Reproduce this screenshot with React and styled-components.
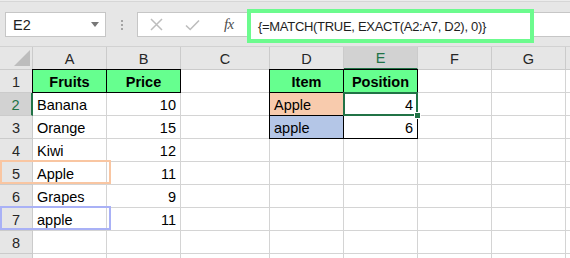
import React from "react";
import styled, { createGlobalStyle, css } from "styled-components";

const GREEN = "#66ff8f";
const EXCEL = "#217346";

const GlobalStyle = createGlobalStyle`
  body {
    margin: 0;
    background: #fff;
    font-family: "Liberation Sans", Arial, sans-serif;
  }
`;

const Sheet = styled.div`
  width: 570px;
  height: 258px;
  overflow: hidden;
  background: #fff;
`;

const Toolbar = styled.div`
  display: flex;
  align-items: flex-start;
  height: 47px;
  box-sizing: border-box;
  padding-top: 12px;
  background: linear-gradient(#ececec 0 1px, #d6d6d6 1px 2px, #e6e6e6 2px);
  border-bottom: 1px solid #d2d2d2;
`;

const NameBox = styled.div`
  display: flex;
  align-items: center;
  justify-content: space-between;
  box-sizing: border-box;
  margin-left: 5px;
  width: 101px;
  height: 25px;
  padding: 0 6px 0 7px;
  background: #fff;
  border: 1px solid #c6c6c6;
  font-size: 14.5px;
  color: #222;
`;

const Caret = styled.span`
  width: 0;
  height: 0;
  border-left: 4.5px solid transparent;
  border-right: 4.5px solid transparent;
  border-top: 5px solid #777;
`;

const Grip = styled.div`
  display: flex;
  flex-direction: column;
  align-items: center;
  justify-content: center;
  gap: 2px;
  width: 31px;
  height: 25px;
`;

const Dot = styled.span`
  width: 2px;
  height: 2px;
  background: #a4a4a4;
`;

const FormulaBar = styled.div`
  flex: 1;
  display: flex;
  box-sizing: border-box;
  height: 25px;
  background: #fff;
  border: 1px solid #c6c6c6;
  border-right: none;
`;

const Buttons = styled.div`
  display: grid;
  grid-template-columns: repeat(3, 1fr);
  align-items: center;
  justify-items: center;
  width: 109px;
`;

const Fx = styled.span`
  font-family: "Liberation Serif", "Times New Roman", serif;
  font-style: italic;
  font-size: 15px;
  color: #4d4d4d;
  letter-spacing: -0.5px;
`;

const Formula = styled.div`
  display: flex;
  align-items: center;
  box-sizing: border-box;
  width: 287px;
  height: 34px;
  margin-top: -4px;
  padding-left: 7px;
  border: 4px solid #6cfb8e;
  background: #fff;
  font-size: 13px;
  letter-spacing: -0.3px;
  color: #1e1e1e;
  white-space: nowrap;
`;

const Grid = styled.div`
  display: grid;
  grid-template-columns: 33px 74px 74px 89px 74px 74px 74px 74px 1fr;
  grid-auto-rows: 23px;
  font-size: 14.5px;
`;

const headBase = css`
  position: relative;
  display: flex;
  align-items: center;
  justify-content: center;
  box-sizing: border-box;
  padding-top: 1px;
  background: ${(p) => (p.$sel ? "#d2d2d2" : "#e6e6e6")};
  color: ${(p) => (p.$sel ? EXCEL : "#262626")};
  border-right: 1px solid #cbcbcb;
  border-bottom: 1px solid #cbcbcb;
`;

const Corner = styled.div`
  ${headBase};
  align-items: flex-end;
  justify-content: flex-end;
  padding: 0 2px 3px 0;
`;

const Triangle = styled.span`
  width: 0;
  height: 0;
  border-left: 16px solid transparent;
  border-bottom: 16px solid #bdbdbd;
`;

const ColHead = styled.div`
  ${headBase};
  ${(p) => p.$sel && css`border-bottom: 2px solid ${EXCEL};`}
`;

const RowHead = styled.div`
  ${headBase};
  ${(p) => p.$sel && css`border-right: 2px solid ${EXCEL};`}
`;

const Mark = styled.span`
  position: absolute;
  top: -2px;
  left: 0;
  width: 111px;
  bottom: 0;
  box-sizing: border-box;
  border: 2px solid ${(p) => p.$color};
  z-index: 3;
  pointer-events: none;
`;

const Cell = styled.div`
  position: relative;
  box-sizing: border-box;
  padding: 2px 4px 0;
  line-height: 20px;
  white-space: nowrap;
  color: #000;
  background: ${(p) => p.$bg || "#fff"};
  font-weight: ${(p) => (p.$bold ? 700 : 400)};
  text-align: ${(p) => p.$align || "left"};
  border-right: 1px solid #d4d4d4;
  border-bottom: 1px solid #d4d4d4;

  ${(p) =>
    p.$boxed &&
    css`
      &::after {
        content: "";
        position: absolute;
        top: -1px;
        left: -1px;
        right: -1px;
        bottom: -1px;
        border: 1px solid #000;
        z-index: 1;
        pointer-events: none;
      }
    `}

  ${(p) =>
    p.$active &&
    css`
      &::after {
        content: "";
        position: absolute;
        top: -1px;
        left: -1px;
        right: -1px;
        bottom: -1px;
        border: 2px solid ${EXCEL};
        z-index: 2;
      }
      &::before {
        content: "";
        position: absolute;
        right: -4px;
        bottom: -4px;
        width: 5px;
        height: 5px;
        background: ${EXCEL};
        border: 1px solid #fff;
        z-index: 3;
      }
    `}
`;

const columns = ["A", "B", "C", "D", "E", "F", "G", ""];

const hdr = (text) => ({ text, bold: true, align: "center", bg: GREEN, boxed: true });
const num = (text) => ({ text, align: "right" });

// last row only peeks in at the bottom edge, its number is out of view
const rows = [
  { A: hdr("Fruits"), B: hdr("Price"), D: hdr("Item"), E: hdr("Position") },
  {
    A: { text: "Banana" },
    B: num("10"),
    D: { text: "Apple", bg: "#f8cbad", boxed: true },
    E: { text: "4", align: "right", boxed: true, active: true },
  },
  {
    A: { text: "Orange" },
    B: num("15"),
    D: { text: "apple", bg: "#b4c6e7", boxed: true },
    E: { text: "6", align: "right", boxed: true },
  },
  { A: { text: "Kiwi" }, B: num("12") },
  { A: { text: "Apple" }, B: num("11"), mark: "#f9c6a2" },
  { A: { text: "Grapes" }, B: num("9") },
  { A: { text: "apple" }, B: num("11"), mark: "#a9b1f6" },
  {},
  { hideLabel: true },
];

const CrossIcon = () => (
  <svg width="13" height="13" viewBox="0 0 13 13">
    <path d="M1 1 L12 12 M12 1 L1 12" stroke="#bdbdbd" strokeWidth="1.5" fill="none" />
  </svg>
);

const CheckIcon = () => (
  <svg width="15" height="12" viewBox="0 0 15 12">
    <path d="M1 6.5 L5.2 10.5 L14 1.5" stroke="#bdbdbd" strokeWidth="1.6" fill="none" />
  </svg>
);

export default function App() {
  return (
    <Sheet>
      <GlobalStyle />
      <Toolbar>
        <NameBox>
          E2
          <Caret />
        </NameBox>
        <Grip>
          <Dot />
          <Dot />
          <Dot />
        </Grip>
        <FormulaBar>
          <Buttons>
            <CrossIcon />
            <CheckIcon />
            <Fx>fx</Fx>
          </Buttons>
          <Formula>{"{=MATCH(TRUE, EXACT(A2:A7, D2), 0)}"}</Formula>
        </FormulaBar>
      </Toolbar>
      <Grid>
        <Corner>
          <Triangle />
        </Corner>
        {columns.map((c, i) => (
          <ColHead key={i} $sel={c === "E"}>
            {c}
          </ColHead>
        ))}
        {rows.map((row, r) => (
          <React.Fragment key={r}>
            <RowHead $sel={r === 1}>
              {row.hideLabel ? null : r + 1}
              {row.mark && <Mark $color={row.mark} />}
            </RowHead>
            {columns.map((c, i) => {
              const cell = row[c] || {};
              return (
                <Cell
                  key={i}
                  $bg={cell.bg}
                  $bold={cell.bold}
                  $align={cell.align}
                  $boxed={cell.boxed}
                  $active={cell.active}
                >
                  {cell.text}
                </Cell>
              );
            })}
          </React.Fragment>
        ))}
      </Grid>
    </Sheet>
  );
}
